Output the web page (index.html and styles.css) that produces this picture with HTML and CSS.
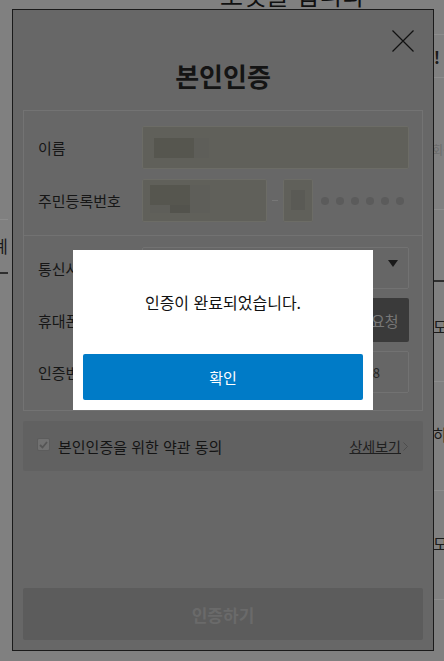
FILE: index.html
```html
<!DOCTYPE html>
<html lang="ko">
<head>
    <meta charset="UTF-8">
    <meta name="viewport" content="width=device-width, initial-scale=1.0">
    <title>본인인증</title>
    <link rel="stylesheet" href="styles.css">
</head>
<body>
    <div class="page">
        <h2 class="page-title">포켓몰 입니다</h2>
        <div class="page-cols">
            <div class="col-left">
                <div class="left-row">합계</div>
            </div>
            <div class="col-right">
                <div class="r-head"><span>가입하세요!</span></div>
                <div class="r-note">회원님 혜택</div>
                <div class="r-sub"></div>
                <div class="r-item first">모바일</div>
                <div class="r-item">하기</div>
                <div class="r-item">모음</div>
            </div>
        </div>
    </div>

    <div class="modal">
        <button class="modal-close" type="button">
            <svg width="22" height="22" viewBox="0 0 22 22"><path d="M0.5 0.5L21.5 21.5M21.5 0.5L0.5 21.5" stroke="#111" stroke-width="1.2" fill="none"/></svg>
        </button>
        <h1 class="modal-title">본인인증</h1>

        <div class="form-box">
            <div class="form-sec top">
                <div class="form-row">
                    <label>이름</label>
                    <div class="field mask-field">
                        <div class="mosaic name-mosaic"><i class="m1"></i><i class="m2"></i></div>
                    </div>
                </div>
                <div class="form-row">
                    <label>주민등록번호</label>
                    <div class="jumin">
                        <div class="field jumin-front">
                            <div class="mosaic birth-mosaic">
                                <i class="m1"></i><i class="m1"></i><i class="m2"></i>
                                <i class="m2"></i><i class="m3"></i><i class="m2"></i>
                            </div>
                        </div>
                        <span class="dash"></span>
                        <div class="field jumin-back"><i class="back-mosaic"></i></div>
                        <div class="dots"><i></i><i></i><i></i><i></i><i></i><i></i></div>
                    </div>
                </div>
            </div>
            <div class="form-sec bottom">
                <div class="form-row">
                    <label>통신사</label>
                    <div class="select"><span class="caret"></span></div>
                </div>
                <div class="form-row">
                    <label>휴대폰번호</label>
                    <div class="phone">
                        <div class="field plain"></div>
                        <button class="btn-req" type="button">인증요청</button>
                    </div>
                </div>
                <div class="form-row">
                    <label>인증번호</label>
                    <div class="field plain timer">02:28</div>
                </div>
            </div>
        </div>

        <div class="agree">
            <span class="check">
                <svg width="9" height="8" viewBox="0 0 9 8"><path d="M1 4L3.5 6.5L8 1" stroke="#555" stroke-width="1.8" fill="none"/></svg>
            </span>
            <span class="agree-text">본인인증을 위한 약관 동의</span>
            <a class="agree-more">상세보기</a>
            <svg class="chev" width="5" height="9" viewBox="0 0 5 9"><path d="M0.5 0.5L4.5 4.5L0.5 8.5" stroke="#4d4d4d" fill="none"/></svg>
        </div>

        <button class="btn-submit" type="button">인증하기</button>

        <div class="alert-layer">
            <div class="alert">
                <p class="alert-msg">인증이 완료되었습니다.</p>
                <button class="alert-ok" type="button">확인</button>
            </div>
        </div>
    </div>
</body>
</html>
```

FILE: styles.css
```css
* {
    box-sizing: border-box;
}
body {
    margin: 0;
    height: 661px;
    overflow: hidden;
    background: #808080;
    font-family: "Noto Sans CJK KR", "Noto Sans", sans-serif;
    color: #141414;
}

/* page behind the popup */
.page-title {
    margin: -22px 0 0;
    padding-left: 220px;
    font-size: 25px;
    line-height: 32px;
    font-weight: normal;
    color: #111;
    white-space: nowrap;
}
.page-cols {
    display: flex;
    margin-top: 3px;
}
.col-left {
    width: 60px;
    margin-left: -52px;
    padding-top: 206px;
}
.left-row {
    height: 55px;
    border-top: 1px solid #8c8c8c;
    border-bottom: 2px solid #2e2e2e;
    text-align: right;
    font-size: 17px;
    line-height: 52px;
    color: #1a1a1a;
}
.col-right {
    width: 44px;
    margin-left: auto;
    padding-top: 21px;
    white-space: nowrap;
}
.r-head {
    height: 43px;
    border-top: 1px solid #8c8c8c;
    display: flex;
    justify-content: flex-end;
    align-items: center;
    padding-right: 4px;
    font-size: 17px;
    font-weight: bold;
    color: #1a1a1a;
}
.r-note {
    height: 132px;
    border-top: 1px solid #8c8c8c;
    padding: 64px 0 0 32px;
    font-size: 12px;
    line-height: 16px;
    color: #6c6c6c;
}
.r-sub {
    height: 73px;
    border-top: 1px solid #8c8c8c;
    border-bottom: 2px solid #2e2e2e;
}
.r-item {
    height: 109px;
    border-bottom: 1px solid #8c8c8c;
    padding: 42px 0 0 33px;
    font-size: 16px;
    line-height: 20px;
    color: #1a1a1a;
}
.r-item.first {
    height: 100px;
    padding-top: 34px;
}

/* popup */
.modal {
    position: absolute;
    left: 12px;
    top: 9px;
    width: 422px;
    height: 642px;
    border: 1px solid #1a1a1a;
    background: #676767;
    padding: 49px 10px 10px;
    display: flex;
    flex-direction: column;
}
.modal-close {
    position: absolute;
    top: 20px;
    right: 19px;
    width: 22px;
    height: 22px;
    padding: 0;
    border: 0;
    background: none;
}
.modal-close svg {
    display: block;
}
.modal-title {
    margin: 0;
    font-size: 26px;
    line-height: 34px;
    font-weight: 700;
    text-align: center;
    color: #141414;
}

.form-box {
    margin-top: 17px;
    border: 1px solid #737373;
}
.form-sec {
    display: flex;
    flex-direction: column;
    gap: 10px;
    padding: 0 13px 0 14px;
}
.form-sec.top {
    padding-top: 15px;
    padding-bottom: 13px;
    border-bottom: 1px solid #727272;
}
.form-sec.bottom {
    padding-top: 11px;
    padding-bottom: 17px;
}
.form-row {
    display: flex;
    align-items: center;
    height: 43px;
}
.form-sec.bottom .form-row {
    height: 42px;
}
.form-row label {
    width: 104px;
    font-size: 15px;
    color: #161616;
}
.field {
    height: 100%;
    background: #60605a;
    border: 1px solid #6c6c66;
    border-radius: 2px;
}
.field.plain {
    background: #666;
    border-color: #727272;
}
.mask-field {
    flex: 1;
    padding: 11px;
}
.mosaic {
    display: grid;
}
.mosaic i.m1 { background: #56564f; }
.mosaic i.m2 { background: #5e5e59; }
.mosaic i.m3 { background: #53534d; }
.name-mosaic {
    grid-template-columns: 40px 15px;
    grid-template-rows: 20px;
}
.jumin {
    flex: 1;
    height: 100%;
    display: flex;
    align-items: center;
}
.jumin-front {
    width: 125px;
    padding: 5px 7px;
}
.birth-mosaic {
    grid-template-columns: 20px 20px 20px;
    grid-template-rows: 20px 8px;
}
.dash {
    width: 6px;
    height: 1px;
    margin: 0 5px;
    background: #777;
}
.jumin-back {
    width: 30px;
    padding: 10px 7px;
}
.back-mosaic {
    display: block;
    height: 20px;
    background: #5a5a55;
}
.dots {
    display: flex;
    gap: 7px;
    margin-left: 8px;
}
.dots i {
    width: 8px;
    height: 8px;
    border-radius: 50%;
    background: #5b5b5b;
}
.select {
    flex: 1;
    height: 100%;
    background: #666;
    border: 1px solid #727272;
    border-radius: 2px;
    display: flex;
    justify-content: flex-end;
    padding: 12px 10px 0 0;
}
.caret {
    width: 0;
    height: 0;
    border-left: 5px solid transparent;
    border-right: 5px solid transparent;
    border-top: 7px solid #1a1a1a;
}
.phone {
    flex: 1;
    height: 100%;
    display: flex;
    gap: 8px;
}
.phone .field {
    flex: 1;
}
.btn-req {
    width: 76px;
    height: 44px;
    margin-top: -1px;
    border: 0;
    border-radius: 2px;
    background: #3a3a3a;
    color: #777;
    font-family: inherit;
    font-size: 15px;
}
.timer {
    flex: 1;
    display: flex;
    align-items: center;
    justify-content: flex-end;
    padding-right: 28px;
    font-size: 13px;
    color: #262626;
}

.agree {
    margin-top: 10px;
    height: 50px;
    background: #616161;
    border-radius: 2px;
    display: flex;
    align-items: center;
    padding: 0 15px 0 14px;
}
.check {
    width: 13px;
    height: 13px;
    margin-top: -3px;
    border: 1px solid #5c5c5c;
    border-radius: 2px;
    background: #717171;
    display: flex;
    align-items: center;
    justify-content: center;
}
.agree-text {
    margin-left: 8px;
    font-size: 15px;
    color: #141414;
}
.agree-more {
    margin-left: auto;
    font-size: 14px;
    color: #1f1f1f;
    text-decoration: underline;
}
.chev {
    margin-left: 2px;
}

.btn-submit {
    margin-top: auto;
    height: 52px;
    border: 0;
    border-radius: 2px;
    background: #5c5c5c;
    color: #6a6a6a;
    font-family: inherit;
    font-size: 17px;
    font-weight: 700;
}

/* completion alert */
.alert-layer {
    position: absolute;
    inset: 0;
    display: flex;
    align-items: center;
    justify-content: center;
}
.alert {
    width: 300px;
    height: 160px;
    background: #fff;
    display: flex;
    flex-direction: column;
    padding: 0 10px 10px;
}
.alert-msg {
    flex: 1;
    margin: 0;
    display: flex;
    align-items: center;
    justify-content: center;
    font-size: 16px;
    color: #111;
}
.alert-ok {
    height: 46px;
    border: 0;
    border-radius: 2px;
    background: #007bc7;
    color: #fff;
    font-family: inherit;
    font-size: 15px;
}
```
